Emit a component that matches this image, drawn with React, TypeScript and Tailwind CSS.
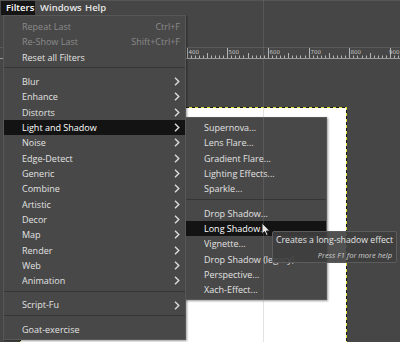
import React from "react";

type Item =
  | { kind: "item"; label: string; shortcut?: string; sub?: boolean; disabled?: boolean; active?: boolean }
  | { kind: "sep" };

const filterItems: Item[] = [
  { kind: "item", label: "Repeat Last", shortcut: "Ctrl+F", disabled: true },
  { kind: "item", label: "Re-Show Last", shortcut: "Shift+Ctrl+F", disabled: true },
  { kind: "item", label: "Reset all Filters" },
  { kind: "sep" },
  { kind: "item", label: "Blur", sub: true },
  { kind: "item", label: "Enhance", sub: true },
  { kind: "item", label: "Distorts", sub: true },
  { kind: "item", label: "Light and Shadow", sub: true, active: true },
  { kind: "item", label: "Noise", sub: true },
  { kind: "item", label: "Edge-Detect", sub: true },
  { kind: "item", label: "Generic", sub: true },
  { kind: "item", label: "Combine", sub: true },
  { kind: "item", label: "Artistic", sub: true },
  { kind: "item", label: "Decor", sub: true },
  { kind: "item", label: "Map", sub: true },
  { kind: "item", label: "Render", sub: true },
  { kind: "item", label: "Web", sub: true },
  { kind: "item", label: "Animation", sub: true },
  { kind: "sep" },
  { kind: "item", label: "Script-Fu", sub: true },
  { kind: "sep" },
  { kind: "item", label: "Goat-exercise" },
];

const lightItems: Item[] = [
  { kind: "item", label: "Supernova..." },
  { kind: "item", label: "Lens Flare..." },
  { kind: "item", label: "Gradient Flare..." },
  { kind: "item", label: "Lighting Effects..." },
  { kind: "item", label: "Sparkle..." },
  { kind: "sep" },
  { kind: "item", label: "Drop Shadow..." },
  { kind: "item", label: "Long Shadow...", active: true },
  { kind: "item", label: "Vignette..." },
  { kind: "item", label: "Drop Shadow (legacy)..." },
  { kind: "item", label: "Perspective..." },
  { kind: "item", label: "Xach-Effect..." },
];

const Chevron = () => (
  <svg width="6" height="9" viewBox="0 0 6 9" className="shrink-0">
    <path d="M1 0.8 L4.8 4.5 L1 8.2" fill="none" stroke="#dcdcdc" strokeWidth="1.4" />
  </svg>
);

const MenuList = ({ items }: { items: Item[] }) => (
  <div className="flex flex-col">
    {items.map((it, i) =>
      it.kind === "sep" ? (
        <div key={i} className="h-[9px] pt-[2px]">
          <div className="h-px bg-[#353535]" />
        </div>
      ) : (
        <div
          key={i}
          className={`h-[15.33px] flex items-center pr-[5px] pl-[18px] ${
            it.active ? "bg-[#131313] text-white" : it.disabled ? "text-[#8b8b8b]" : "text-[#e2e2e2]"
          }`}
        >
          <span className="flex-1 whitespace-nowrap overflow-hidden">{it.label}</span>
          {it.shortcut && <span className="whitespace-nowrap">{it.shortcut}</span>}
          {it.sub && <Chevron />}
        </div>
      )
    )}
  </div>
);

// horizontal ruler: 100 units every ~40.7px, 400 at x=186
const Ruler = () => {
  const ticks: React.ReactNode[] = [];
  const labels: React.ReactNode[] = [];
  const step = 40.7;
  const origin = 186.5;
  for (let k = -5; k <= 5; k++) {
    const x0 = origin + k * step;
    for (let j = 0; j < 10; j++) {
      const x = Math.round(x0 + (j * step) / 10) + 0.5;
      const h = j === 0 ? 10 : j === 5 ? 5 : 2.5;
      ticks.push(<line key={`${k}-${j}`} x1={x} x2={x} y1={11 - h} y2={11} stroke="#b4b4b4" strokeWidth="1" />);
    }
    // labels left of 400 sit under the menu
    if (k >= 0) {
      const last = k === 5;
      labels.push(
        <text
          key={k}
          x={last ? 399.5 : Math.round(x0) + 1.5}
          textAnchor={last ? "end" : "start"}
          y={7}
          fontSize="5.5"
          fill="#c4c4c4"
          fontFamily="'DejaVu Sans', sans-serif"
        >
          {400 + k * 100}
        </text>
      );
    }
  }
  return (
    <svg width="400" height="12" className="block">
      <line x1="0" x2="400" y1="0.5" y2="0.5" stroke="#5a5a5a" />
      <line x1="0" x2="400" y1="11.5" y2="11.5" stroke="#9a9a9a" />
      {ticks}
      {labels}
    </svg>
  );
};

const Ants = ({ vertical }: { vertical?: boolean }) => (
  <div
    className={
      vertical
        ? "w-px bg-[repeating-linear-gradient(180deg,#e0e030_0_3px,#1a1a1a_3px_6px)]"
        : "h-px bg-[repeating-linear-gradient(90deg,#e0e030_0_3px,#1a1a1a_3px_6px)]"
    }
  />
);

export default function App() {
  return (
    <div className="relative w-[400px] h-[342px] overflow-hidden bg-[#464646] text-[9px] font-['Open_Sans',sans-serif]">
      {/* menubar */}
      <div className="h-[15px] flex items-center text-[9.5px] font-semibold text-[#e6e6e6] border-t border-[#555] whitespace-nowrap">
        <div className="ml-[1px] w-[34px] h-full flex items-center pl-[5px] bg-[#151515] text-white">Filters</div>
        <div className="w-[45px] pl-[5px]">Windows</div>
        <div className="pl-[5px]">Help</div>
      </div>

      {/* canvas area */}
      <div className="flex flex-col h-[327px]">
        <div className="h-[32px]" />
        <Ruler />
        <div className="h-[48px]" />
        <div className="flex-1 flex pl-[20px]">
          <div className="w-[327px] flex">
            <Ants vertical />
            <div className="flex-1 flex flex-col">
              <Ants />
              <div className="flex-1 bg-white" />
            </div>
            <Ants vertical />
          </div>
        </div>
      </div>

      {/* Filters menu */}
      <div className="absolute left-[3px] top-[15px] w-[183px] bg-[#484848] border border-[#585858] pt-[3px] pb-[2px] shadow-[1px_1px_2px_rgba(0,0,0,0.4)]">
        <MenuList items={filterItems} />
      </div>

      {/* Light and Shadow submenu */}
      <div className="absolute left-[185px] top-[117px] w-[142px] bg-[#484848] border border-[#585858] pt-[2px] pb-[1px] shadow-[1px_1px_2px_rgba(0,0,0,0.4)]">
        <MenuList items={lightItems} />
      </div>

      {/* guide line */}
      <div className="absolute left-[263px] top-0 w-px h-full bg-[#8a8a8a]/25" />

      {/* tooltip */}
      <div className="absolute left-[272px] top-[231px] w-[125px] h-[32px] bg-[#3e3e3e]/90 border border-[#5c5c5c] rounded-[2px] px-[3px] flex flex-col whitespace-nowrap">
        <div className="text-[#e4e4e4] text-[8.7px] leading-none pt-[4px]">Creates a long-shadow effect</div>
        <div className="text-[#d0d0d0] text-[7.5px] italic leading-none text-right pt-[7px] pr-[1px]">Press F1 for more help</div>
      </div>

      {/* mouse pointer */}
      <svg className="absolute left-[261px] top-[222px]" width="11" height="15" viewBox="0 0 11 15">
        <path d="M1 1 L1 12 L3.6 9.6 L5.4 13.6 L7 12.9 L5.3 9 L8.8 9 Z" fill="#e8e8e8" stroke="#202020" strokeWidth="1" strokeLinejoin="round" />
      </svg>
    </div>
  );
}
